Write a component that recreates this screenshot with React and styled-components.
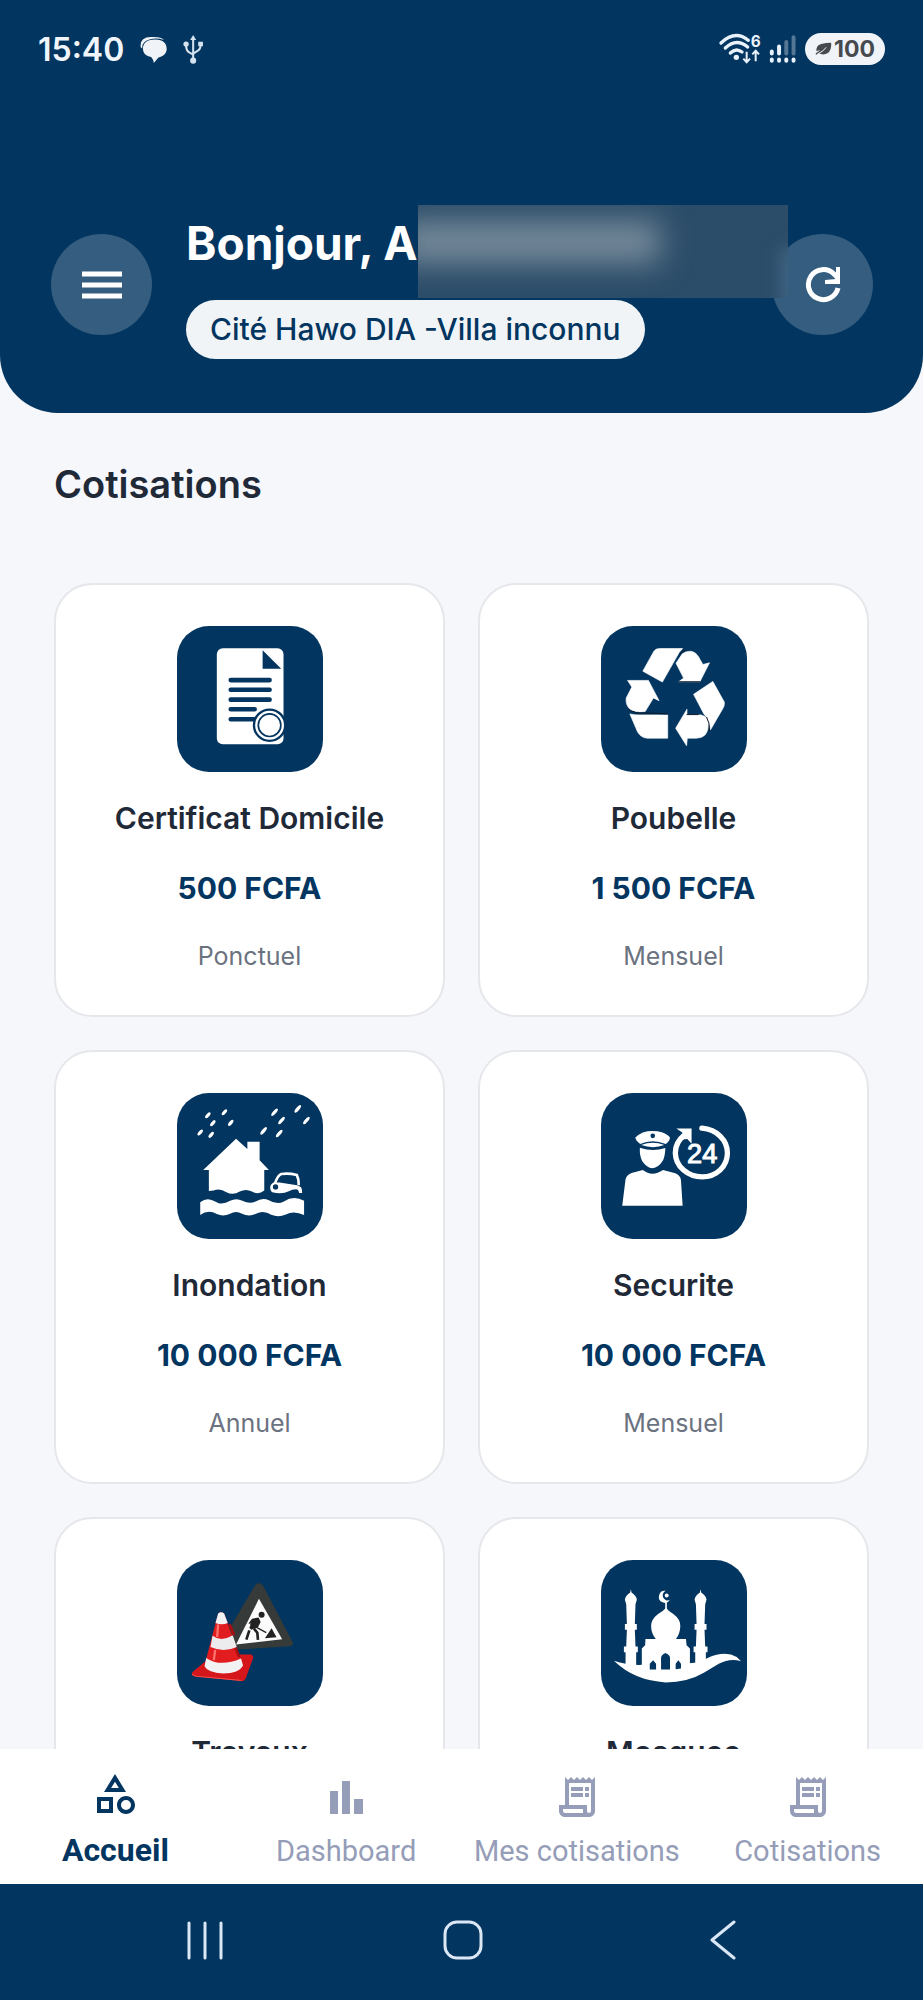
import React from "react";
import styled, { createGlobalStyle } from "styled-components";
import { MdOutlineCategory, MdOutlineReceiptLong } from "react-icons/md";

const NAVY = "#02355f";

const CertificateIcon = () => (
  <Pictogram viewBox="22 20 440 440" aria-hidden="true">
    <rect x="142" y="87" width="201" height="289" rx="18" fill="#fff" />
    <path d="M280 93v56h56z" fill={NAVY} />
    <path
      d="M184 183h117M184 212h117M184 242h117M184 271h72M184 301h80"
      stroke={NAVY}
      strokeWidth="14"
      strokeLinecap="round"
    />
    <circle cx="301" cy="319" r="47" fill="#fff" stroke={NAVY} strokeWidth="7" />
    <circle cx="301" cy="319" r="34" fill="#fff" stroke={NAVY} strokeWidth="5" />
  </Pictogram>
);

const RecycleIcon = () => (
  <Pictogram viewBox="30 20 440 440" aria-hidden="true">
    <g fill="#fff" stroke="#fff" strokeWidth="2" strokeLinejoin="round">
      <path d="M190 95q6-7 16-7h70l-10 11-51 90-59-33z" />
      <path d="M256 132l19-28q9-8 24-8 17 2 25 17l13 23 20-5-29 57h-64l15-11z" />
      <path d="M367 187l35 63q1 10-6 21l-36 62q-4-31-20-48l-31-59z" />
      <path d="M289 271v17h43q14 3 22 19 1 27-10 41-10 10-26 10h-28l-2 23-33-53z" />
      <path d="M117 285q17 4 34 3h80v70h-62q-19-1-29-19z" />
      <path d="M110 184h63l32 61-17-8-25 41q-24 4-44-5-16-15-13-36l17-33z" />
    </g>
    <path
      d="M284 92q-13 6-17 14M263 188h66M113 270q18 15 51 12l66 3M288 287h36M348 294q10 18 9 41"
      fill="none"
      stroke="#111b29"
      strokeWidth="3"
    />
  </Pictogram>
);

const drops = [
  [115, 95, 10],
  [165, 86, 10],
  [130, 119, 10],
  [184, 118, 10],
  [92, 147, 10],
  [125, 154, 10],
  [316, 86, 13],
  [386, 76, 13],
  [337, 111, 13],
  [412, 111, 13],
  [283, 142, 13],
  [330, 150, 13],
];

const FloodIcon = () => (
  <Pictogram viewBox="22 28 440 440" aria-hidden="true">
    {drops.map(([x, y, r]) => (
      <ellipse
        key={`${x}-${y}`}
        cx={x}
        cy={y}
        rx={r + 1}
        ry="5"
        fill="#fff"
        transform={`rotate(-50 ${x} ${y})`}
      />
    ))}
    <path
      d="M200 166l34 31v-22h37v56l28 29h-14v62q-18 14-37 3-18-10-37 0-20 12-40 2-20-14-39-5l-14 1v-63h-17z"
      fill="#fff"
    />
    <path
      d="M92 357q20-15 40-4l16 7q17 3 34-7 19-10 37 0 22 11 40 2 20-13 40-4 24 15 45 4 30-20 61-2v43q-30-15-55-2-22 10-44 1-23-15-46-3-21 11-42 0-18-11-36 0-20 10-40 1-26-16-50 3z"
      fill="#fff"
    />
    <path
      d="M316 303q10-28 20-31 24-3 47 3 7 14 6 31"
      fill="none"
      stroke="#fff"
      strokeWidth="8"
    />
    <path
      d="M313 298h18l53 8 12 6q4 8 3 17h-9q-2-11-9-11-12 0-22 6-20 10-50 3-7-5-6-18 3-8 10-11z"
      fill="#fff"
    />
    <circle cx="319" cy="311" r="8" fill={NAVY} />
  </Pictogram>
);

const SecurityIcon = () => (
  <Pictogram viewBox="30 28 440 440" aria-hidden="true">
    <path
      d="M133 163q7-9 23-16 28-9 60 0 17 7 22 16-2 12-13 19-40-17-77 0-11-6-15-19z"
      fill="#fff"
    />
    <circle cx="186" cy="157" r="7" fill={NAVY} />
    <path d="M151 185q35-14 70 0-34 13-70 0z" fill="#fff" />
    <path
      d="M147 193q38 13 77 1-1 25-7 37-14 23-32 24-17-1-31-22-8-15-7-40z"
      fill="#fff"
    />
    <path
      d="M94 368l10-80q2-12 18-19l34-9q28 22 61 0l37 10q15 7 17 20l5 78z"
      fill="#fff"
    />
    <path
      d="M334 134c46 4 77 36 77 75 0 41-34 72-76 72s-81-31-81-73c0-21 10-39 27-53"
      fill="none"
      stroke="#fff"
      strokeWidth="16"
      strokeLinecap="round"
    />
    <path d="M257 135h46v46l-13-14-21 2 7-21z" fill="#fff" />
    <text
      x="335"
      y="239"
      textAnchor="middle"
      fill="#fff"
      stroke="#fff"
      strokeWidth="3"
      fontFamily="Liberation Sans, sans-serif"
      fontSize="82"
    >
      24
    </text>
  </Pictogram>
);

const RoadworksIcon = () => (
  <Pictogram viewBox="22 20 440 440" aria-hidden="true">
    <path
      d="M256 98q12-17 26 0l88 168q6 12-7 14l-159 10-26-60z"
      fill="#363a38"
    />
    <path d="M269 137l70 122-139 16z" fill="#fbfbfb" />
    <circle cx="277" cy="185" r="9" fill="#222" />
    <path
      d="M240 232l-9 28M254 227l10 12 2 22"
      fill="none"
      stroke="#222"
      strokeWidth="8"
    />
    <path d="M248 197l20-4 6 14-8 16-20 7-6-5 5-14-8 1z" fill="#222" />
    <path d="M243 213l48 26" stroke="#222" strokeWidth="4" />
    <path d="M287 256l20-30 15 27z" fill="#222" />
    <path
      d="M68 358l65-54 112 1q8 3 6 12l-22 60q-5 9-14 8l-142-15q-9-3-5-12z"
      fill="#d5161b"
    />
    <path d="M67 364q6 6 18 7l130 12" stroke="#f8514e" strokeWidth="3" fill="none" />
    <path d="M146 181q9-7 18 0l56 157q-10 24-59 24-47-2-57-22z" fill="#e11d20" />
    <path d="M146 181q9-7 18 0l11 29q-18 8-37 0z" fill="#f3f3f5" />
    <path d="M129 248q26 20 61-1l12 35q-39 18-79 0z" fill="#ececef" />
    <path d="M110 315q42 29 105 2l6 21q-12 24-60 24-46-2-56-22z" fill="#f2f2f3" />
    <path d="M146 214l-3 38M137 291l-4 31" stroke="#ff716c" strokeWidth="7" />
    <path d="M180 213l14 34M199 286l11 27" stroke="#a80f13" strokeWidth="8" />
  </Pictogram>
);

const Minaret = ({ x }) => (
  <g transform={`translate(${x} 0)`}>
    <path
      d="M0 108l2 10q15 10 16 22l-4 13-2 60h6v17h-6l2 51h7v17h-5v52h-32v-52h-5v-17h7l2-51h-6v-17h6l-2-60-4-13q1-12 16-22z"
      fill="#fff"
    />
  </g>
);

const MosqueIcon = () => (
  <Pictogram viewBox="30 20 440 440" aria-hidden="true">
    <Minaret x={120} />
    <Minaret x={330} />
    <path
      d="M225 113a18 18 0 1 0 13 27 15 15 0 1 1-13-27z"
      fill="#fff"
    />
    <circle cx="228" cy="127" r="6" fill="#fff" />
    <path d="M226 145v30" stroke="#fff" strokeWidth="5" />
    <path
      d="M226 164q8 11 22 19 22 16 21 37-1 24-13 38h30l2 19 10 10v61H153v-61l10-10 1-19h31q-14-17-14-39 0-20 21-36 17-10 24-19z"
      fill="#fff"
    />
    <path
      d="M69 324q40 14 85 12v-2h142v-3q32-2 55-16 53-23 88-3l13 13q-34-10-67 8l-45 27q-49 29-115 29-95-5-156-65z"
      fill="#fff"
    />
    <path
      d="M211 350v-36q1-9 13-14 13 5 14 14v36zM177 350v-17l10-11 9 11v17zM255 349v-16l8-11 8 11v14z"
      fill={NAVY}
    />
  </Pictogram>
);

const services = [
  { name: "Certificat Domicile", price: "500 FCFA", period: "Ponctuel", Icon: CertificateIcon },
  { name: "Poubelle", price: "1 500 FCFA", period: "Mensuel", Icon: RecycleIcon },
  { name: "Inondation", price: "10 000 FCFA", period: "Annuel", Icon: FloodIcon },
  { name: "Securite", price: "10 000 FCFA", period: "Mensuel", Icon: SecurityIcon },
  { name: "Travaux", Icon: RoadworksIcon },
  { name: "Mosquee", Icon: MosqueIcon },
];

const BarsIcon = () => (
  <svg viewBox="0 0 48 48" width="48" height="48" fill="currentColor">
    <path d="M8 18h8v23H8zM20 8h8v33h-8zM32 26h9v15h-9z" />
  </svg>
);

const tabs = [
  { label: "Accueil", Icon: MdOutlineCategory, active: true },
  { label: "Dashboard", Icon: BarsIcon },
  { label: "Mes cotisations", Icon: MdOutlineReceiptLong },
  { label: "Cotisations", Icon: MdOutlineReceiptLong },
];

const StatusIcons = () => (
  <StatusGroup>
    <WifiIcon viewBox="54 42 126 90" aria-hidden="true">
      <g fill="none" stroke="#e9f2fb" strokeWidth="10" strokeLinecap="round">
        <path d="M60 69q42-40 82-8" />
        <path d="M73 84q33-32 67-3" />
        <path d="M88 99q17-17 35-3" />
      </g>
      <circle cx="106" cy="112" r="8" fill="#e9f2fb" />
      <path
        d="M137 95v31M127 116l10 11 10-11M164 124V93M154 103l10-11 10 11"
        fill="none"
        stroke="#e9f2fb"
        strokeWidth="6"
      />
      <text x="149" y="80" fill="#e9f2fb" fontFamily="Inter, sans-serif" fontWeight="700" fontSize="46">
        6
      </text>
    </WifiIcon>
    <svg viewBox="204 46 84 88" width="28" height="29" aria-hidden="true">
      <g stroke="#e9f2fb" strokeWidth="12" strokeLinecap="round">
        <path d="M212 96v6M234 81v21" />
        <path d="M256 67v35M278 53v49" opacity="0.35" />
        <path d="M212 120v4M234 120v4M256 120v4M278 120v4" />
      </g>
    </svg>
    <Battery>
      <svg viewBox="336 66 50 42" width="17" height="14" aria-hidden="true">
        <path d="M384 68q2 22-11 32-13 7-27-1l-8 6v-5q5-3 13-10-9 2-11 4-2-18 14-22 15-4 30-4z" fill="#46494e" />
        <path d="M345 101q16-7 24-19" stroke="#f0f4f8" strokeWidth="3" fill="none" />
      </svg>
      100
    </Battery>
  </StatusGroup>
);

const App = () => (
  <Screen>
    <GlobalStyle />
    <Header>
      <StatusBar>
        <StatusGroup>
          <Clock>15:40</Clock>
          <svg viewBox="357 50 82 80" width="27" height="27" aria-hidden="true">
            <path d="M359 83q-3-31 31-31 31-2 40 9-23-7-42-2-26 6-24 28z" fill="#f0f4f8" />
            <path d="M403 60c25 0 35 12 35 28 0 14-10 24-25 26l-14 17q-1-10-8-18c-18-4-25-13-25-26 0-17 14-27 37-27z" fill="#f0f4f8" />
          </svg>
          <UsbIcon viewBox="487 46 62 86" aria-hidden="true">
            <g fill="none" stroke="#d5e2ef" strokeWidth="6">
              <path d="M517 54v70M496 77q0 14 8 20l13 7M539 76q0 13-9 17l-13 8" />
            </g>
            <g fill="#d5e2ef">
              <path d="M517 46l9 15h-18zM532 66h14v13h-14z" />
              <circle cx="496" cy="73" r="8" />
              <circle cx="517" cy="122" r="9" />
            </g>
          </UsbIcon>
        </StatusGroup>
        <StatusIcons />
      </StatusBar>
      <Welcome>
        <RoundButton aria-label="Menu">
          <svg viewBox="0 0 42 28" width="42" height="28">
            <path d="M1 3h40M1 14h40M1 25h40" stroke="#fff" strokeWidth="5" />
          </svg>
        </RoundButton>
        <Greeting>
          <Title>Bonjour, A</Title>
          <HiddenName />
          <Residence>Cité Hawo DIA -Villa inconnu</Residence>
        </Greeting>
        <RoundButton aria-label="Actualiser">
          <svg viewBox="0 0 36 36" width="36" height="36">
            <path
              d="M33 21a15 15 0 1 1-4-14l4 4"
              fill="none"
              stroke="#fff"
              strokeWidth="5"
            />
            <path d="M35 0v17H20v-4l11-1V0z" fill="#fff" />
          </svg>
        </RoundButton>
      </Welcome>
    </Header>

    <Content>
      <SectionTitle>Cotisations</SectionTitle>
      <CardGrid>
        {services.map(({ name, price, period, Icon }) => (
          <Card key={name}>
            <Icon />
            <CardName>{name}</CardName>
            {price && <Price>{price}</Price>}
            {period && <Period>{period}</Period>}
          </Card>
        ))}
      </CardGrid>
    </Content>

    <TabBar>
      {tabs.map(({ label, Icon, active }) => (
        <Tab key={label} href="#" $active={active}>
          <Icon size={48} />
          {label}
        </Tab>
      ))}
    </TabBar>

    <SystemBar>
      <SystemButton aria-label="Applications récentes">
        <svg viewBox="0 0 40 40" width="40" height="40">
          <path d="M4 3v35M20 3v35M36 3v35" />
        </svg>
      </SystemButton>
      <SystemButton aria-label="Écran d'accueil">
        <svg viewBox="0 0 40 40" width="40" height="40">
          <rect x="2" y="2" width="36" height="36" rx="12" />
        </svg>
      </SystemButton>
      <SystemButton aria-label="Retour">
        <svg viewBox="0 0 40 40" width="40" height="40">
          <path d="M32 2L10 20l22 18" />
        </svg>
      </SystemButton>
    </SystemBar>
  </Screen>
);

export default App;

const GlobalStyle = createGlobalStyle`
  * {
    box-sizing: border-box;
  }

  body {
    margin: 0;
    background: #f5f7fb;
    font-family: Inter, sans-serif;
  }

  h1, h2, h3, p, ul {
    margin: 0;
    padding: 0;
  }

  button {
    border: 0;
    padding: 0;
    background: none;
  }
`;

const Screen = styled.div`
  display: flex;
  flex-direction: column;
  height: 100vh;
`;

const Header = styled.header`
  flex: none;
  padding-bottom: 54px;
  background: ${NAVY};
  border-radius: 0 0 58px 58px;
`;

const StatusBar = styled.div`
  display: flex;
  justify-content: space-between;
  align-items: flex-start;
  height: 210px;
  padding: 29px 38px 0;
`;

const StatusGroup = styled.div`
  display: flex;
  align-items: center;
  height: 40px;
  gap: 8px;
`;

const Clock = styled.span`
  margin-right: 8px;
  color: #f0f5fb;
  font-size: 32px;
  font-weight: 600;
`;

const UsbIcon = styled.svg`
  width: 21px;
  height: 29px;
  margin-left: 8px;
`;

const WifiIcon = styled.svg`
  width: 42px;
  height: 30px;
  overflow: visible;
`;

const Battery = styled.span`
  display: flex;
  align-items: center;
  justify-content: center;
  gap: 2px;
  width: 80px;
  height: 32px;
  border-radius: 16px;
  background: #f0f4f8;
  color: #46494e;
  font-size: 23px;
  font-weight: 700;
`;

const Welcome = styled.div`
  display: flex;
  align-items: center;
  gap: 34px;
  padding: 0 50px 0 51px;
`;

const RoundButton = styled.button`
  display: grid;
  place-items: center;
  flex: none;
  width: 101px;
  height: 101px;
  border-radius: 50%;
  background: rgba(255, 255, 255, 0.2);
`;

const Greeting = styled.div`
  position: relative;
  flex: 1;
  min-width: 0;
`;

const Title = styled.h1`
  color: #fff;
  font-size: 46px;
  font-weight: 700;
  line-height: 66px;
  white-space: nowrap;
`;

/* frosted strip over the rest of the name, overlapping the refresh button */
const HiddenName = styled.div`
  position: absolute;
  z-index: 1;
  top: -5px;
  left: 232px;
  right: -50px;
  height: 93px;
  overflow: hidden;
  background: #2c4d69;

  &::before {
    content: "";
    position: absolute;
    top: 16px;
    left: -20px;
    width: 262px;
    height: 42px;
    background: #768a9a;
    filter: blur(15px);
  }

  &::after {
    content: "";
    position: absolute;
    right: -12px;
    bottom: -10px;
    width: 20px;
    height: 60px;
    background: #3f6382;
    filter: blur(8px);
  }
`;

const Residence = styled.p`
  width: fit-content;
  margin-top: 24px;
  padding: 0 24px;
  border-radius: 30px;
  background: #f1f4f7;
  color: ${NAVY};
  font-size: 30px;
  font-weight: 500;
  line-height: 59px;
  white-space: nowrap;
`;

const Content = styled.main`
  flex: 1;
  min-height: 0;
  padding: 44px 54px 0;
  overflow-y: auto;
  scrollbar-width: none;
`;

const SectionTitle = styled.h2`
  margin-bottom: 72px;
  color: #1f2937;
  font-size: 38px;
  font-weight: 600;
  line-height: 54px;
`;

const CardGrid = styled.ul`
  display: grid;
  grid-template-columns: 1fr 1fr;
  gap: 33px;
  list-style: none;
`;

const Card = styled.li`
  display: flex;
  flex-direction: column;
  align-items: center;
  padding: 41px 0;
  border: 2px solid #e5e7eb;
  border-radius: 38px;
  background: #fff;
`;

const Pictogram = styled.svg`
  width: 146px;
  height: 146px;
  border-radius: 32px;
  background: ${NAVY};
`;

const CardName = styled.h3`
  margin-top: 26px;
  color: #1f2937;
  font-size: 30px;
  font-weight: 600;
  line-height: 40px;
`;

const Price = styled.p`
  margin-top: 30px;
  color: ${NAVY};
  font-size: 30px;
  font-weight: 700;
  line-height: 40px;
`;

const Period = styled.p`
  margin-top: 30px;
  color: #6b7280;
  font-size: 25px;
  line-height: 36px;
`;

const TabBar = styled.nav`
  display: grid;
  grid-template-columns: repeat(4, 1fr);
  flex: none;
  height: 135px;
  background: #fff;
`;

const Tab = styled.a`
  display: flex;
  flex-direction: column;
  align-items: center;
  gap: ${(props) => (props.$active ? "12px" : "10px")};
  padding-top: ${(props) => (props.$active ? "21px" : "24px")};
  color: ${(props) => (props.$active ? NAVY : "#959db8")};
  font-family: Roboto, sans-serif;
  font-size: ${(props) => (props.$active ? "32px" : "29px")};
  font-weight: ${(props) => (props.$active ? 700 : 400)};
  line-height: 40px;
  text-decoration: none;
  white-space: nowrap;
`;

const SystemBar = styled.div`
  display: grid;
  grid-template-columns: repeat(3, 1fr);
  flex: none;
  height: 116px;
  padding: 0 72px 4px 76px;
  background: ${NAVY};
`;

const SystemButton = styled.button`
  display: grid;
  place-items: center;

  svg {
    fill: none;
    stroke: #dbe7f5;
    stroke-width: 3;
    stroke-linecap: round;
    stroke-linejoin: round;
  }
`;
